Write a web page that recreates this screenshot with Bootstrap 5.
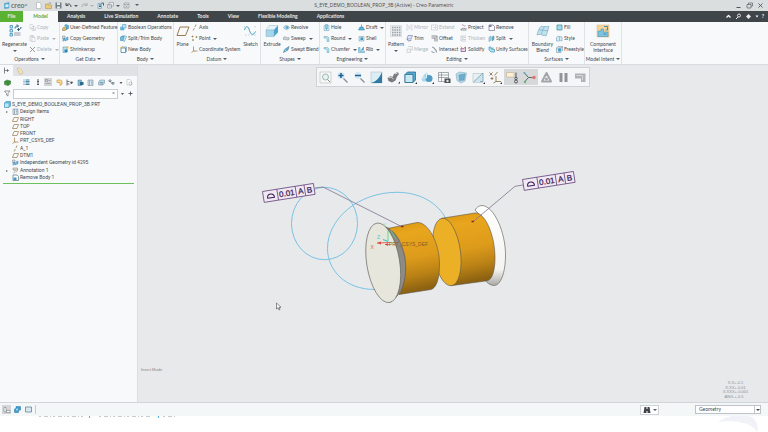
<!DOCTYPE html>
<html lang="en">
<head>
<meta charset="utf-8">
<meta name="viewport" content="width=device-width, initial-scale=1">
<title>S_EYE_DEMO_BOOLEAN_PROP_3B (Active) - Creo Parametric</title>
<link href="https://cdn.jsdelivr.net/npm/bootstrap@5.3.0/dist/css/bootstrap.min.css" rel="stylesheet">
<style>
:root{--ink:#44494f;--line:#dfe2e6;--pane:#f7f9fb}
body{font-family:Lato,"Open Sans",sans-serif;font-size:5px;line-height:7px;color:var(--ink);background:#fff;white-space:nowrap;overflow-x:hidden}
button,input,select{font:inherit;color:inherit}
button{background:none;border:0;padding:0}
svg{display:block;flex:none;fill:none;stroke-linejoin:round}
.app{min-height:100vh}
.titlebar{height:11px;background:#dadedf;display:grid;grid-template-columns:1fr auto 1fr}
.titlebar h1{font-family:"Open Sans",sans-serif;font-size:5px;line-height:11px;font-weight:400;margin:0}
.brand{font-size:7px;line-height:9px;font-weight:700;color:#6b757b;width:24px}
.quick{gap:3px}
.i6{width:7px;height:7px}
.i8{width:8px;height:8px}
.i12{width:13px;height:13px}
.i14{width:14px;height:14px}
.tabs{background:#3f4549;height:11px}
.tabs a{color:#e6e9ea;text-decoration:none;line-height:11px;padding:0 10px 0 9px;font-weight:700}
.tabs a.file{background:#5ab232;padding:0;width:23px;text-align:center}
.tabs a.now{background:var(--pane);color:#5aa53c;padding:0;width:35px;text-align:center}
.ribbon{background:var(--pane);border-bottom:1px solid #d8dbdf}
.grp{border-right:1px solid var(--line)}
.cols{display:grid;height:33px}
.cap{height:9px;line-height:9px}
.dd::after{content:"";display:inline-block;border:2px solid transparent;border-bottom:0;border-top-color:#565b60;margin-left:2px;vertical-align:1px}
.it{display:flex;align-items:center;gap:1px;height:11px}
.off{color:#b0b4b8}
.off svg{opacity:.5}
.off.dd::after{border-top-color:#b0b4b8}
.big{display:flex;flex-direction:column;align-items:center;padding-top:2px;line-height:6px;gap:3px}
.big.dd::after{margin:0}
.g-ops{width:60px}.g-ops .cols{grid-template-columns:29px 1fr}
.g-get{width:58px}.g-get .cols,.g-body .cols{padding-left:2px}
.g-body{width:56px}
.g-dat{width:87px}.g-dat .cols{grid-template-columns:17px 1fr 20px}
.g-shp{width:59px}.g-shp .cols{grid-template-columns:22px 1fr}
.g-eng{width:66px}.g-eng .cols{grid-template-columns:35px 1fr;padding-left:3px}
.g-edt{width:143px}.g-edt .cols{grid-template-columns:20px 25px 29px 28px 1fr}
.g-srf{width:56px}.g-srf .cols{grid-template-columns:27px 1fr}
.g-int{width:37px}
.side{width:138px;background:var(--pane);border-right:1px solid #dcdee1}
.sidetabs{height:11px;background:#e1e2e5}
.sidetabs button{width:13px;height:11px;display:grid;place-items:center}
.sidetabs .now{background:var(--pane)}
.sidetools{height:12px}
.filter{height:11px;gap:2px}
.filter input{display:block;width:105px;height:10px;border:1px solid #c9cdd1;background:#fff;padding:0 2px}
.filter span{top:1px;right:3px}
.tree{font-family:Roboto,sans-serif;min-height:80px;margin:2px 0 0}
.tree li{height:7px;gap:1px}
.tw{position:relative}
.tw::before{content:"";position:absolute;left:-6px;top:3px;border:1px solid transparent;border-left:2px solid #6c7176}
.insert{border-top:1px solid #6cc15a;margin:2px 3px}
.stage{background:#e8e9eb}
.scene{inset:0;width:100%;height:100%}
.gbar{z-index:1;background:#f5f6f8;border:1px solid #cfd2d5;height:20px;margin-top:2px}
.gbar button{width:17px;height:16px;display:grid;place-items:center}
.gbar .on{background:#d6d8da}
.status{height:14px;background:#f4f7f7;border-top:1px solid #d3d6d9}
.modes{gap:2px;padding-left:2px}
.modes button{width:9px;height:9px;display:grid;place-items:center}
.status .on{background:#d3d5d8}
.find{border:1px solid #cfd3d6;height:10px;width:19px;padding-left:2px;background:#fff}
.pick{margin:0 7px 0 36px}
.pick select{display:block;width:66px;height:9px;border:1px solid #bfc3c7;background:#fff;padding:0 3px;appearance:none;line-height:7px;border-radius:0}
.pick::after{content:"";position:absolute;right:1px;top:4px;border:2px solid transparent;border-bottom:0;border-top-color:#444}
.pick::before{content:"";position:absolute;right:6px;top:1px;bottom:1px;width:1px;background:#c5c9cc}
.under{min-height:16px}
</style>
<script src="https://cdn.jsdelivr.net/npm/bootstrap@5.3.0/dist/js/bootstrap.bundle.min.js"></script>
</head>
<body>
<svg width="0" height="0" class="position-absolute" aria-hidden="true">
<defs>
<linearGradient id="gold" x1="0" y1="0" x2="0.15" y2="1"><stop offset="0" stop-color="#d9960f"/><stop offset=".2" stop-color="#e8a51d"/><stop offset=".55" stop-color="#dd9b1b"/><stop offset=".8" stop-color="#b98115"/><stop offset="1" stop-color="#8c6211"/></linearGradient>
<linearGradient id="white" x1="0" y1="0" x2="0" y2="1"><stop offset="0" stop-color="#fff"/><stop offset=".8" stop-color="#f4f4f1"/><stop offset="1" stop-color="#aaa9a5"/></linearGradient>
<symbol id="copy" viewBox="0 0 14 14"><path d="M2 1h5l2 2v6H2zM6 5h5l2 2v6H6z" fill="#fff" stroke="#7a8087"/><path d="M8 9h3M8 11h3" stroke="#7a8087"/></symbol>
<symbol id="paste" viewBox="0 0 14 14"><path d="M2 2h8v10H2z" fill="#eee" stroke="#7a8087"/><path d="M4 1h4v2H4zM6 5h6v8H6z" fill="#fff" stroke="#7a8087"/></symbol>
<symbol id="cross" viewBox="0 0 14 14"><path d="M2 2l10 10M12 2L2 12" stroke="#222" stroke-width="1.8"/></symbol>
<symbol id="udf" viewBox="0 0 14 14"><path d="M1 9l3-3h5v5l-3 2H1z" fill="#d8b867" stroke="#8c7440"/><path d="M5 3l3-2 5 2v6l-4 2V5z" fill="#56b2d7" stroke="#3286ac"/></symbol>
<symbol id="geo" viewBox="0 0 14 14"><path d="M1 2h5v5H1z" fill="#d9dee2" stroke="#7a8087"/><path d="M2 13V8l3-2v5M6 12c0-4 2-7 6-8v6c-3 0-4 1-6 2z" fill="#72bfe0" stroke="#3c81a8"/></symbol>
<symbol id="wrap" viewBox="0 0 14 14"><path d="M2 2h8v11H2z" fill="#bfe0f0" stroke="#398cb8"/><path d="M5 7h6v5H5z" fill="#2687b8"/><path d="M9 1h4v4H9z" fill="#efb83c"/></symbol>
<symbol id="bool" viewBox="0 0 14 14"><path d="M5 1h7v7H8v4H1V6h4z" fill="#bfe3f2" stroke="#3c91b8"/><circle cx="5" cy="9" r="3" fill="#54aed2"/></symbol>
<symbol id="split" viewBox="0 0 14 14"><path d="M1 4l3-2h4v9H1z" fill="#6fbedd" stroke="#2f7ea6"/><path d="M9 1l4 2-4 10-3-2z" fill="#d3eaf4" stroke="#3e8bb0"/></symbol>
<symbol id="nbody" viewBox="0 0 14 14"><path d="M2 4h9v9H2z" fill="#fff" stroke="#2e7498" stroke-width="1.4"/><path d="M2 4l2-2h9v9l-2 2" stroke="#2e7498"/><circle cx="3" cy="3" r="2.2" fill="#f1b538"/></symbol>
<symbol id="plane" viewBox="0 0 14 14"><path d="M4 3h9l-3 8H1z" stroke="#9b7a45" stroke-width="1.4"/></symbol>
<symbol id="axis" viewBox="0 0 14 14"><path d="M4 13l3-5M8 6l2-5" stroke="#937548" stroke-width="1.4"/></symbol>
<symbol id="point" viewBox="0 0 14 14"><path d="M1 3h4M3 1v4M2 10h4M4 8v4M9 4h4M11 2v4" stroke="#8e6f3f" stroke-width="1.3"/></symbol>
<symbol id="csys" viewBox="0 0 14 14"><path d="M5 1v9h8M5 10l-4 3" stroke="#9b7a45" stroke-width="1.4"/><path d="M5 9l2 3" stroke="#a9873f"/></symbol>
<symbol id="rev" viewBox="0 0 14 14"><path d="M1 7c2-5 9-5 12 0-2 5-9 5-12 0z" fill="#b9dfef" stroke="#6b8fa0"/><circle cx="8" cy="7" r="2.5" fill="#4da6cc"/></symbol>
<symbol id="sweep" viewBox="0 0 14 14"><path d="M1 5c3-4 6 2 11 0v4c-5 3-8-2-11 0z" fill="#cbd4da" stroke="#7c8790"/></symbol>
<symbol id="swb" viewBox="0 0 14 14"><path d="M1 13l2-6 9-6-2 7z" fill="#5eb4d8" stroke="#476b80"/><path d="M3 7l3 3" stroke="#fff"/></symbol>
<symbol id="hole" viewBox="0 0 14 14"><path d="M2 3h10v10H2z" fill="#d4ecf5" stroke="#65a6c1"/><path d="M5 1h4v8H5z" fill="#fff" stroke="#368cae"/><path d="M7 2v10" stroke="#368cae"/></symbol>
<symbol id="round" viewBox="0 0 14 14"><path d="M2 3h5c4 0 5 2 5 6v4H8V9c0-2-1-3-3-3H2z" fill="#b7e0ee" stroke="#5aa0bf"/><path d="M3 3h4" stroke="#e3b95a"/></symbol>
<symbol id="draft" viewBox="0 0 14 14"><path d="M1 12h12L10 6H4z" fill="#55b5da" stroke="#327fa0"/><path d="M7 1v5" stroke="#d29d45" stroke-width="2"/></symbol>
<symbol id="shell" viewBox="0 0 14 14"><path d="M2 3h10v9H2z" fill="#cce7f1" stroke="#6e98aa"/><path d="M5 5h5v5H5z" fill="#3c96bd"/></symbol>
<symbol id="rib" viewBox="0 0 14 14"><path d="M1 3h3v7h9v3H1z" fill="#a7d9ea" stroke="#4d9aba"/><path d="M6 9l5-7v6" fill="#4fb0d4" stroke="#3787aa"/></symbol>
<symbol id="mirror" viewBox="0 0 14 14"><path d="M2 1v12l4-4V5zM12 1v12L8 9V5z" stroke="#7a8087"/></symbol>
<symbol id="trim" viewBox="0 0 14 14"><path d="M4 1h9l-3 7H2z" fill="#e2e4f3" stroke="#5f64a0"/><path d="M2 8c0 4 6 5 9 2" stroke="#59618b" stroke-width="1.4"/></symbol>
<symbol id="merge" viewBox="0 0 14 14"><path d="M4 1h9v7H8M2 6h7v7H2z" fill="#eee" stroke="#7a8087"/></symbol>
<symbol id="extend" viewBox="0 0 14 14"><path d="M1 2h12v10H1zM4 7h7M8 4l3 3-3 3" stroke="#7a8087"/></symbol>
<symbol id="offset" viewBox="0 0 14 14"><path d="M1 2h11v11M1 6h7v7" stroke="#4b5056" stroke-width="1.3"/><path d="M6 8l4-4" stroke="#a575ae"/></symbol>
<symbol id="inter" viewBox="0 0 14 14"><path d="M2 2c5 1 9 5 9 11M1 10c1 3 4 3 6 3" stroke="#555b61" stroke-width="1.2"/><path d="M4 3l7 9" stroke="#5b9cb5"/></symbol>
<symbol id="proj" viewBox="0 0 14 14"><path d="M1 12c4-6 8-2 12-3M2 12h11" stroke="#5b6268" stroke-width="1.3"/><path d="M4 2c4-2 3 5 7 1" stroke="#9a5ba8" stroke-width="1.3"/></symbol>
<symbol id="thick" viewBox="0 0 14 14"><path d="M12 2H2v10h10M12 5H5v4h7" stroke="#7a8087" stroke-width="1.2"/></symbol>
<symbol id="solid" viewBox="0 0 14 14"><path d="M2 4l4 2 5-4v9H2z" fill="#e9d8ea" stroke="#7e4a7d" stroke-width="1.4"/><path d="M1 1l4 3" stroke="#e2554d"/></symbol>
<symbol id="remove" viewBox="0 0 14 14"><path d="M2 2h8l3 3v8H2z" fill="#fff" stroke="#595b78" stroke-width="1.2"/><path d="M2 2h5v4H2z" fill="#8c70a8"/></symbol>
<symbol id="spl" viewBox="0 0 14 14"><path d="M2 5l4-3v8l-4 3z" fill="#b7dce9" stroke="#4f8ca5"/><path d="M8 4l4-2v7l-4 3z" fill="#5db2d0" stroke="#4f8ca5"/></symbol>
<symbol id="unify" viewBox="0 0 14 14"><path d="M2 2h4v4h4V3M2 2v6l4 4h7V7H9" fill="#b9e2ee" stroke="#2f91b3" stroke-width="1.3"/></symbol>
<symbol id="fill" viewBox="0 0 14 14"><path d="M2 2h10v10H2z" fill="#9edde6" stroke="#3b8a9a" stroke-width="1.4"/></symbol>
<symbol id="style" viewBox="0 0 14 14"><path d="M1 12V5c2-3 4-3 6-2l5 1v8l-3-1-3 1z" fill="#d5ebf4" stroke="#5f97ae"/><path d="M7 3v8" stroke="#5f97ae"/></symbol>
<symbol id="free" viewBox="0 0 14 14"><path d="M1 4h9v9H1zM4 1h9v9M1 4l3-3M10 4l3-3" fill="#dbeaf2" stroke="#6a8698"/><circle cx="7" cy="8" r="3.4" fill="#46a5cc"/></symbol>
<symbol id="lst" viewBox="0 0 14 14"><path d="M5 2h8M5 5h8M5 8h8M5 11h8" stroke="#2c7297" stroke-width="1.7"/><path d="M1 2h2M1 5h2M1 8h2M1 11h2" stroke="#3e88ac" stroke-width="1.7"/></symbol>
<symbol id="cubeb" viewBox="0 0 14 14"><path d="M1 4l3-3h9v9l-3 3H1z" fill="#62b8dc" stroke="#2c81aa"/><path d="M2 5h7v7H2z" fill="#c2e6f4"/></symbol>
<symbol id="anno" viewBox="0 0 14 14"><path d="M2 2h9v4H2zM6 6v3l-3 4" stroke="#777d84" fill="#e3ded0"/><path d="M8 11l4-6" stroke="#9a7b42"/></symbol>
<symbol id="rmb" viewBox="0 0 14 14"><path d="M2 2h8l3 3v8H2z" fill="#fff" stroke="#3c5b70" stroke-width="1.2"/><path d="M3 7h6v5H3z" fill="#3d99c3"/></symbol>
<symbol id="grid" viewBox="0 0 14 14"><path d="M2 2h10v11H2zM5 2v11M8 4h3M8 7h3M8 10h3" fill="#dce8ef" stroke="#668090"/></symbol>
<g id="frame">
  <path d="M0 0h51.5v11H0zM14.5 0v11M33 0v11M42 0v11" fill="#f0e9f4" stroke="#69487e" stroke-width=".8"/>
  <path d="M4 7.5h7c0-5-7-5-7 0z" stroke="#3b1d55" stroke-width="1"/>
  <g font-size="8" fill="#3b1d55" stroke="#3b1d55" stroke-width=".25"><text x="16" y="8.400">0.01</text><text x="35" y="8.400">A</text><text x="44" y="8.400">B</text></g>
</g>
</defs></svg>

<div class="app d-flex flex-column">
<header>
  <div class="titlebar">
    <div class="d-flex align-items-center ps-1">
      <svg class="i6" viewBox="0 0 14 14"><path d="M1 3l9-2v11l-9 1z" fill="#63b7dd" stroke="#378cb4"/><path d="M3 5h6v5H3z" fill="#d9eff8"/></svg>
      <span class="brand">creo<small>°</small></span>
      <div class="quick d-flex align-items-center">
        <button aria-label="New"><svg class="i6" viewBox="0 0 14 14"><path d="M3 1h6l3 3v9H3z" fill="#fff" stroke="#999fa5"/></svg></button>
        <button aria-label="Open"><svg class="i6" viewBox="0 0 14 14"><path d="M1 4h5l1 2h6v7H1z" fill="#ecca77" stroke="#a98640"/><path d="M7 3l3-2 2 3" stroke="#6d675a"/></svg></button>
        <button aria-label="Save"><svg class="i6" viewBox="0 0 14 14"><path d="M1 1h12v12H1z" fill="#737d86"/><path d="M4 1h6v5H4zM4 9h6v4H4z" fill="#e5e9ec"/></svg></button>
        <button aria-label="Undo" class="dd d-flex align-items-center"><svg class="i6" viewBox="0 0 14 14"><path d="M3 6c4-4 9-2 9 4M2 2v5h5" stroke="#4a4f54" stroke-width="2"/></svg></button>
        <button aria-label="Redo" class="dd off d-flex align-items-center"><svg class="i6" viewBox="0 0 14 14"><path d="M11 6c-4-4-9-2-9 4M12 2v5H7" stroke="#666" stroke-width="1.6"/></svg></button>
        <button aria-label="Regenerate model"><svg class="i6" viewBox="0 0 14 14"><path d="M2 3h7v10H2z" fill="#d4e5ec" stroke="#5e8596"/><path d="M4 6h4M4 9h4M9 2h4v5" stroke="#27718f" stroke-width="2"/></svg></button>
        <button aria-label="Windows" class="dd d-flex align-items-center"><svg class="i6" viewBox="0 0 14 14"><path d="M4 1h9v7H4zM1 5h8v7H1z" fill="#e9ecee" stroke="#7a8289"/></svg></button>
        <button aria-label="Close window"><svg class="i6" viewBox="0 0 14 14"><path d="M2 2h10v10H2zM2 5h10M5 7l4 4M9 7l-4 4" stroke="#858b91"/></svg></button>
        <button aria-label="Customize" class="dd"></button>
      </div>
    </div>
    <h1>S_EYE_DEMO_BOOLEAN_PROP_3B (Active) - Creo Parametric</h1>
    <div class="d-flex align-items-center justify-content-end gap-1 pe-1">
      <button aria-label="Minimize"><svg class="i6" viewBox="0 0 14 14"><path d="M3 11h8" stroke="#555" stroke-width="2"/></svg></button>
      <button aria-label="Restore"><svg class="i6" viewBox="0 0 14 14"><path d="M2 5h8v7H2zM5 5V2h8v6h-3" stroke="#5b6065" stroke-width="1.4"/></svg></button>
      <button aria-label="Close"><svg class="i6" viewBox="0 0 14 14"><path d="M3 3l8 8M11 3l-8 8" stroke="#4e5358" stroke-width="1.8"/></svg></button>
    </div>
  </div>
  <nav class="tabs d-flex">
    <a href="#" class="file">File</a><a href="#" class="now">Model</a><a href="#">Analysis</a><a href="#">Live Simulation</a><a href="#">Annotate</a><a href="#">Tools</a><a href="#">View</a><a href="#">Flexible Modeling</a><a href="#">Applications</a>
    <div class="quick ms-auto d-flex align-items-center pe-1">
      <button aria-label="Minimize ribbon"><svg class="i6" viewBox="0 0 14 14"><path d="M3 9l4-4 4 4" stroke="#fff" stroke-width="2.4"/></svg></button>
      <button aria-label="Search"><svg class="i6" viewBox="0 0 14 14"><circle cx="8" cy="5" r="3" stroke="#fff" stroke-width="1.6"/><path d="M6 8l-4 4" stroke="#fff" stroke-width="1.8"/></svg></button>
      <button aria-label="Learning"><svg class="i6" viewBox="0 0 14 14"><path d="M7 2l5 5-5 5-5-5z" fill="#e9ebec"/></svg></button>
      <svg width="4" height="7" viewBox="0 0 8 14"><path d="M1 5h6l-3 4z" fill="#fff"/></svg>
      <button class="text-white fw-bold">?</button>
    </div>
  </nav>

  <div class="ribbon d-flex">
    <section class="grp g-ops"><div class="cols">
      <button class="big dd"><svg class="i14" viewBox="0 0 28 28"><path d="M4 3h5v5H4zM4 11h5v5H4zM4 19h5v5H4z" fill="#cfe8f4" stroke="#3c8fb6" stroke-width="1.6"/><path d="M12 18h13M12 22h13" stroke="#7d8b95" stroke-width="1.6"/><path d="M14 9c0-4 3-6 6-5M18 1l3 3-3 3M26 6c0 4-3 6-6 5M22 8l-3 3 3 3" stroke="#245e7a" stroke-width="2"/></svg><span>Regenerate</span></button>
      <div><button class="it off"><svg class="i6"><use href="#copy"/></svg>Copy</button><button class="it off dd"><svg class="i6"><use href="#paste"/></svg>Paste</button><button class="it off dd"><svg class="i6"><use href="#cross"/></svg>Delete</button></div>
    </div><button class="cap dd d-block mx-auto">Operations</button></section>
    <section class="grp g-get"><div class="cols"><div><button class="it"><svg class="i6"><use href="#udf"/></svg>User-Defined Feature</button><button class="it"><svg class="i6"><use href="#geo"/></svg>Copy Geometry</button><button class="it"><svg class="i6"><use href="#wrap"/></svg>Shrinkwrap</button></div></div><button class="cap dd d-block mx-auto">Get Data</button></section>
    <section class="grp g-body"><div class="cols"><div><button class="it"><svg class="i6"><use href="#bool"/></svg>Boolean Operations</button><button class="it"><svg class="i6"><use href="#split"/></svg>Split/Trim Body</button><button class="it"><svg class="i6"><use href="#nbody"/></svg>New Body</button></div></div><button class="cap dd d-block mx-auto">Body</button></section>
    <section class="grp g-dat"><div class="cols">
      <button class="big"><svg class="i14" viewBox="0 0 28 28"><path d="M8 6h18l-7 17H2z" stroke="#9a7b4c" stroke-width="2"/></svg><span>Plane</span></button>
      <div><button class="it"><svg class="i6"><use href="#axis"/></svg>Axis</button><button class="it dd"><svg class="i6"><use href="#point"/></svg>Point</button><button class="it"><svg class="i6"><use href="#csys"/></svg>Coordinate System</button></div>
      <button class="big"><svg class="i14" viewBox="0 0 28 28"><path d="M3 12c3-9 7-9 10 1s8 10 12 2" stroke="#459bbf" stroke-width="2"/><path d="M4 22h3M10 22h3M16 22h3M22 22h3M3 4v3M24 4v3" stroke="#7db2cb"/></svg><span>Sketch</span></button>
    </div><button class="cap dd d-block mx-auto">Datum</button></section>
    <section class="grp g-shp"><div class="cols">
      <button class="big"><svg class="i14" viewBox="0 0 28 28"><path d="M8 3h18v15l-7 6H8z" fill="#b5dbeb"/><path d="M2 12l6-9h18l-8 9z" fill="#e6f2f7" stroke="#a3c4d3"/><path d="M18 12l8-9v13l-8 9z" fill="#4ba4cd"/><path d="M2 12h16v13H2z" fill="#a8d7ea" stroke="#7eafc7"/></svg><span>Extrude</span></button>
      <div><button class="it"><svg class="i6"><use href="#rev"/></svg>Revolve</button><button class="it dd"><svg class="i6"><use href="#sweep"/></svg>Sweep</button><button class="it"><svg class="i6"><use href="#swb"/></svg>Swept Blend</button></div>
    </div><button class="cap dd d-block mx-auto">Shapes</button></section>
    <section class="grp g-eng"><div class="cols">
      <div><button class="it"><svg class="i6"><use href="#hole"/></svg>Hole</button><button class="it dd"><svg class="i6"><use href="#round"/></svg>Round</button><button class="it dd"><svg class="i6"><use href="#round"/></svg>Chamfer</button></div>
      <div><button class="it dd"><svg class="i6"><use href="#draft"/></svg>Draft</button><button class="it"><svg class="i6"><use href="#shell"/></svg>Shell</button><button class="it dd"><svg class="i6"><use href="#rib"/></svg>Rib</button></div>
    </div><button class="cap dd d-block mx-auto">Engineering</button></section>
    <section class="grp g-edt"><div class="cols">
      <button class="big dd"><svg class="i14" viewBox="0 0 28 28"><path d="M3 3h22v22H3z" fill="#eceff1" stroke="#c8cdd1"/><path d="M6 7h17M6 12h17M6 17h17M6 22h17" stroke="#979da2" stroke-width="3" stroke-dasharray="3 1.7"/></svg><span>Pattern</span></button>
      <div><button class="it off"><svg class="i6"><use href="#mirror"/></svg>Mirror</button><button class="it"><svg class="i6"><use href="#trim"/></svg>Trim</button><button class="it off"><svg class="i6"><use href="#merge"/></svg>Merge</button></div>
      <div><button class="it off"><svg class="i6"><use href="#extend"/></svg>Extend</button><button class="it"><svg class="i6"><use href="#offset"/></svg>Offset</button><button class="it"><svg class="i6"><use href="#inter"/></svg>Intersect</button></div>
      <div><button class="it"><svg class="i6"><use href="#proj"/></svg>Project</button><button class="it off"><svg class="i6"><use href="#thick"/></svg>Thicken</button><button class="it"><svg class="i6"><use href="#solid"/></svg>Solidify</button></div>
      <div><button class="it"><svg class="i6"><use href="#remove"/></svg>Remove</button><button class="it dd"><svg class="i6"><use href="#spl"/></svg>Split</button><button class="it"><svg class="i6"><use href="#unify"/></svg>Unify Surfaces</button></div>
    </div><button class="cap dd d-block mx-auto">Editing</button></section>
    <section class="grp g-srf"><div class="cols">
      <button class="big"><svg class="i14" viewBox="0 0 28 28"><path d="M2 22c2-8 4-14 9-18 5 3 9 0 15 1-2 6-3 11-6 19-5-3-7 1-9-3-4-1-6 0-9 1z" fill="#c3e1ef" stroke="#75a8c1" stroke-width="1.3"/><path d="M11 21c1-7 3-11 6-16M6 12c5-2 11 3 18 1" stroke="#5c9bb8"/></svg><span>Boundary<br>Blend</span></button>
      <div><button class="it"><svg class="i6"><use href="#fill"/></svg>Fill</button><button class="it"><svg class="i6"><use href="#style"/></svg>Style</button><button class="it"><svg class="i6"><use href="#free"/></svg>Freestyle</button></div>
    </div><button class="cap dd d-block mx-auto">Surfaces</button></section>
    <section class="grp g-int"><div class="cols">
      <button class="big"><svg class="i14" viewBox="0 0 28 28"><path d="M2 2h24v24H2z" fill="#f4d49a" stroke="#d2b583"/><path d="M4 14h6v-4h5v6h9v9H4z" fill="#7dc3df" stroke="#438fae"/><path d="M16 5h7v7h-4M15 20h5" stroke="#438fae" stroke-width="2"/></svg><span>Component<br>Interface</span></button>
    </div><button class="cap dd d-block mx-auto">Model Intent</button></section>
  </div>
</header>

<main class="d-flex flex-grow-1">
  <aside class="side flex-shrink-0">
    <div class="sidetabs d-flex">
      <button class="now" aria-label="Model tree"><svg class="i6" viewBox="0 0 14 14"><path d="M3 1v12M3 7h9M9 4v6" stroke="#666b70" stroke-width="1.6"/></svg></button>
      <button aria-label="Layers"><svg class="i8" viewBox="0 0 16 16"><path d="M2 3l5-1 7 8-2 4H7z" fill="#f3eacb" stroke="#bfa75e"/><path d="M5 6l5 5" stroke="#d1b65f"/></svg></button>
    </div>
    <div class="sidetools d-flex align-items-center justify-content-between ps-1 pe-1">
      <svg class="i6" viewBox="0 0 14 14"><path d="M1 5l5-3 7 2v6l-5 3-7-2z" fill="#4a9f44" stroke="#286e2b"/><path d="M1 5l7 2v6M8 7l5-3" stroke="#205e2a"/></svg>
      <svg width="5" height="7"></svg>
      <svg class="i6"><use href="#lst"/></svg>
      <svg class="i6" viewBox="0 0 14 14"><path d="M6 2h4M6 5h4M6 8h4M6 11h4" stroke="#41474d" stroke-width="1.8"/></svg>
      <svg class="i8" viewBox="0 0 16 16"><path d="M0 0h16v16H0z" fill="#d2d4d6"/><path d="M3 3h4v4H3zM9 5h4M3 11h10" stroke="#777d82"/></svg>
      <svg class="i6" viewBox="0 0 14 14"><path d="M2 2h8l2 3v5l-4 3V7H2z" fill="#f8df9d" stroke="#ca9634" stroke-width="1.3"/></svg>
      <svg class="i6" viewBox="0 0 14 14"><path d="M2 1v12M2 5h5M2 10h5M9 6h4l-2 4z" stroke="#4c5359" stroke-width="1.5" fill="#4c5359"/></svg>
      <svg class="i6" viewBox="0 0 14 14"><path d="M2 2h7v11H2z" fill="#87bbd1" stroke="#557c92"/><path d="M6 6h7v6H6z" fill="#276b8d"/></svg>
      <svg class="i6"><use href="#grid"/></svg>
      <svg class="i6" viewBox="0 0 14 14"><path d="M4 2h9v6l-3 4H1V7z" fill="#bddbe8" stroke="#668897"/><path d="M3 7h8M4 10h6" stroke="#3d7089"/></svg>
      <svg class="i6" viewBox="0 0 14 14"><path d="M2 2h4v3H2zM8 7h4v3H8zM4 5l6 6" stroke="#64757f" stroke-width="1.5"/></svg>
      <svg width="4" height="7" viewBox="0 0 8 14"><path d="M1 6h6l-3 4z" fill="#555"/></svg>
      <svg class="i6" viewBox="0 0 14 14"><path d="M2 1h6l3 3v8H2z" fill="#fff" stroke="#aab0b5"/><circle cx="9" cy="9" r="3" stroke="#8a9096"/></svg>
    </div>
    <div class="filter d-flex align-items-center ps-1">
      <svg class="i6" viewBox="0 0 14 14"><path d="M1 2h11L8 7v5l-3-2V7z" stroke="#666c72" stroke-width="1.3"/></svg>
      <div class="position-relative"><input type="text" aria-label="Filter tree"><span class="position-absolute">×</span></div>
      <svg width="5" height="7" viewBox="0 0 10 14"><path d="M2 6h6l-3 4z" fill="#555"/></svg>
      <button aria-label="Add filter"><svg class="i6" viewBox="0 0 14 14"><path d="M7 3v8M3 7h8" stroke="#555a60" stroke-width="1.8"/></svg></button>
    </div>
    <ul class="tree list-unstyled d-flex flex-column justify-content-between ps-1">
      <li class="d-flex align-items-center"><svg class="i6"><use href="#cubeb"/></svg>S_EYE_DEMO_BOOLEAN_PROP_3B.PRT</li>
      <li class="tw ms-2 d-flex align-items-center"><svg class="i6"><use href="#grid"/></svg>Design Items</li>
      <li class="ms-2 d-flex align-items-center"><svg class="i6"><use href="#plane"/></svg>RIGHT</li>
      <li class="ms-2 d-flex align-items-center"><svg class="i6"><use href="#plane"/></svg>TOP</li>
      <li class="ms-2 d-flex align-items-center"><svg class="i6"><use href="#plane"/></svg>FRONT</li>
      <li class="ms-2 d-flex align-items-center"><svg class="i6"><use href="#csys"/></svg>PRT_CSYS_DEF</li>
      <li class="ms-2 d-flex align-items-center"><svg class="i6"><use href="#axis"/></svg>A_1</li>
      <li class="ms-2 d-flex align-items-center"><svg class="i6"><use href="#plane"/></svg>DTM1</li>
      <li class="ms-2 d-flex align-items-center"><svg class="i6"><use href="#geo"/></svg>Independent Geometry id 4295</li>
      <li class="tw ms-2 d-flex align-items-center"><svg class="i6"><use href="#anno"/></svg>Annotation 1</li>
      <li class="ms-2 d-flex align-items-center"><svg class="i6"><use href="#rmb"/></svg>Remove Body 1</li>
    </ul>
    <div class="insert"></div>
  </aside>

  <section class="stage flex-grow-1 position-relative d-flex justify-content-center align-items-start">
    <svg class="scene position-absolute" viewBox="138 65 630 337" preserveAspectRatio="xMidYMid meet" font-family="Liberation Sans, sans-serif">
      <g stroke="#6dbde2" stroke-width=".9"><ellipse cx="324.5" cy="223.5" rx="33" ry="36.2"/><path d="M446 219C438 203 420 192.3 397 192.3C358 192.3 327.5 219 327.5 248.5C327.5 270 345 289.5 375 289.5"/></g>
      <g stroke="#5b564e" stroke-width=".6">
        <path d="M475 210C477 207 479 205.5 482 205.5C494 206 505.5 232 505.5 255C505.5 272 501 286 493.5 285.5C490 285 487 283 485 280L494 262L490 234L478 213z" fill="url(#white)"/>
        <path d="M441.7 218.3L475 213C485 212 495 235 495 258C495 271 492 280 487 280.8L451 285.7z" fill="url(#gold)"/>
        <ellipse cx="446.8" cy="252" rx="13.6" ry="34" transform="rotate(-8 446.8 252)" fill="#ecb027"/>
        <path d="M376.7 223.5L387 227.5C398 232 406 252 406 270C406 284 400 296 389.5 302.5z" fill="#8d8b85"/>
        <path d="M387.5 228.5L417 222.5C428 221.5 439.5 243 439.5 264C439.5 280 436 288 431 289.5L399 294.5C405 286 407 270 405 257C402 243 396 231 387.5 228.5z" fill="url(#gold)"/>
        <ellipse cx="383.2" cy="262.8" rx="16.5" ry="40.2" transform="rotate(-9 383.2 262.8)" fill="#e6e6dc"/>
      </g>
      <g stroke="#7d7390" stroke-width=".8"><path d="M315 188l8-1 79.5 40M523 185l-8 1.3L472.7 222"/><path d="M401 226.5h2.5M471.5 221.5h2.5" stroke="#8c2c24" stroke-width="1.4"/></g>
      <g stroke-width=".8"><path d="M388 241.5v-11" stroke="#3fd27c"/><path d="M391 230l4 8" stroke="#5fc66f"/><path d="M388 241.5l-5-2" stroke="#35c9c4" stroke-width="1.3"/><path d="M390 242.5l-13 .5M385 244.5h5" stroke="#e0483c"/><path d="M377 243l4-1.5v3zM385 244.5l3-1.5v3z" fill="#e0483c"/></g>
      <g font-size="5"><text x="370.5" y="248.5" fill="#e0584c">X</text><text x="377" y="239" fill="#3ec9cf">Z</text><text x="383" y="227" fill="#8fd8a8">Y</text><text x="389" y="246" fill="#8a5a2a">PRT_CSYS_DEF</text></g>
      <use href="#frame" transform="translate(262.5 191.5) rotate(-9)"/>
      <use href="#frame" transform="translate(522.5 179.5) rotate(-9)"/>
      <path d="M276.5 303v6l1.5-1.3 1 2.3 1-.5-1-2.2h2z" fill="#fff" stroke="#444" stroke-width=".6"/>
      <text x="141" y="371" font-size="4" fill="#85888c">Insert Mode</text>
      <g font-size="4" fill="#8d9095" text-anchor="middle"><text x="735.5" y="384">X.X+-0.1</text><text x="735.5" y="388.5">X.XX+-0.01</text><text x="735.5" y="393">X.XXX+-0.001</text><text x="734" y="397.5">ANG.+-0.5</text></g>
    </svg>
    <div class="gbar d-flex align-items-center" role="toolbar" aria-label="Graphics">
      <button aria-label="Refit"><svg class="i12" viewBox="0 0 26 26"><path d="M2 2h22v22H2z" fill="#f6f8f5" stroke="#a9afb0"/><circle cx="13" cy="12" r="6" fill="#e8f3f3" stroke="#82a19d" stroke-width="1.5"/><path d="M17 17l5 5" stroke="#829090" stroke-width="2"/></svg></button>
      <button aria-label="Zoom in"><svg class="i12" viewBox="0 0 26 26"><circle cx="10" cy="9" r="7" fill="#d5e9f5"/><path d="M5 9h10M10 4v10" stroke="#1d5f91" stroke-width="3"/><path d="M15 15l8 8" stroke="#83909a" stroke-width="2.5"/></svg></button>
      <button aria-label="Zoom out"><svg class="i12" viewBox="0 0 26 26"><circle cx="10" cy="9" r="7" fill="#d5e9f5"/><path d="M4 9h12" stroke="#1d5f91" stroke-width="3"/><path d="M15 15l8 8" stroke="#83909a" stroke-width="2.5"/></svg></button>
      <button aria-label="Repaint"><svg class="i12" viewBox="0 0 26 26"><path d="M2 2h22v22H2z" fill="#dceef5" stroke="#a6b8c1"/><path d="M24 2v22H2c9-2 17-9 22-22z" fill="#2d7ba3"/></svg></button>
      <button aria-label="Rendering"><svg class="i12" viewBox="0 0 26 26"><path d="M1 14l6-4 4 2 3-6 7-4 3 4-4 5-3 8-7 4-7-3z" fill="#777c80"/><path d="M3 14l5-2 5 4M16 6l5-2" stroke="#d6d9db" stroke-width="2"/><path d="M22 25h4v-4z" fill="#333"/></svg></button>
      <button aria-label="Display style"><svg class="i12" viewBox="0 0 26 26"><path d="M2 7l5-5h16v16l-5 5H2z" fill="#55a9d1" stroke="#24698d" stroke-width="1.5"/><path d="M2 7h16v16H2z" fill="#cbe7f2" stroke="#24698d" stroke-width="1.5"/><path d="M22 26h4v-4z" fill="#333"/></svg></button>
      <button aria-label="Saved orientations"><svg class="i12" viewBox="0 0 26 26"><path d="M1 15L11 2l7 11v8H3z" fill="#a9d6ea"/><circle cx="16" cy="15" r="7" fill="#509cc4"/><path d="M11 3v11H2" stroke="#d9f0f8" stroke-width="2"/><path d="M22 26h4v-4z" fill="#333"/></svg></button>
      <button aria-label="View manager"><svg class="i12" viewBox="0 0 26 26"><path d="M1 3h20v18H1zM1 8h20M1 13h20M7 3v18" fill="#f9fafb" stroke="#8a9196" stroke-width="1.5"/><path d="M13 15h12v9H13z" fill="#4a4f54"/><circle cx="19" cy="20" r="2.5" fill="#dadde0"/></svg></button>
      <button aria-label="Perspective"><svg class="i12" viewBox="0 0 26 26"><path d="M2 6l7-4 14 2-3 16-8 4-8-5z" fill="#b9d9e8" stroke="#769fb4"/><path d="M8 8l12-2-2 12-9 1z" fill="#6daed0" stroke="#4f8cae"/></svg></button>
      <button aria-label="Section"><svg class="i12" viewBox="0 0 26 26"><path d="M2 5h19v18H2z" fill="#e8f1f5" stroke="#a5b4bb"/><path d="M3 22L22 4v17h-6" fill="#cce4ed" stroke="#6e98aa" stroke-width="1.5"/><path d="M22 26h4v-4z" fill="#333"/></svg></button>
      <button aria-label="Datum display"><svg class="i12" viewBox="0 0 26 26"><path d="M1 3l6 6M7 3L1 9M11 9l6-7M3 15h6M6 12v6M14 10v11h10M14 21l-5 3" stroke="#8b7349" stroke-width="1.7"/><path d="M22 26h4v-4z" fill="#333"/></svg></button>
      <button class="on" aria-label="Annotation display"><svg class="i12" viewBox="0 0 26 26"><path d="M1 3h15v9H1z" fill="#fff1cf" stroke="#b5a789"/><path d="M20 3v10" stroke="#53585d" stroke-width="2"/><circle cx="20" cy="15" r="2.5" stroke="#53585d" stroke-width="2"/><circle cx="20" cy="21" r="3" stroke="#53585d" stroke-width="2"/></svg></button>
      <button class="on" aria-label="Spin center"><svg class="i12" viewBox="0 0 26 26"><path d="M2 3l9 10-8 9M11 13h9" stroke="#4f6e65" stroke-width="2"/><circle cx="22" cy="13" r="3.5" fill="#ea7070"/><circle cx="4" cy="22" r="2.5" fill="#6abb76"/><circle cx="3" cy="4" r="2" fill="#64aebf"/></svg></button>
      <button aria-label="Simulate"><svg class="i12" viewBox="0 0 26 26"><path d="M13 4l9 17H4z" stroke="#a3a6a8" stroke-width="4"/><circle cx="13" cy="16" r="3" fill="#a3a6a8"/></svg></button>
      <button aria-label="Pause"><svg class="i12" viewBox="0 0 26 26"><path d="M5 4h6v18H5zM15 4h6v18h-6z" fill="#929598"/></svg></button>
      <button aria-label="Stop"><svg class="i12" viewBox="0 0 26 26"><path d="M2 5h21v17h-9v-7H2z" fill="#b1b4b6"/><path d="M5 9h12v9" stroke="#d4d6d7" stroke-width="2"/></svg></button>
    </div>
  </section>
</main>

<footer>
  <div class="status d-flex align-items-center">
    <div class="modes d-flex align-items-center me-auto">
      <button class="on" aria-label="Navigator"><svg class="i8" viewBox="0 0 16 16"><path d="M2 3h4v9H2zM7 9h7v4H7z" fill="#fff" stroke="#606a72"/></svg></button>
      <button aria-label="Browser"><svg class="i6" viewBox="0 0 14 14"><path d="M4 1h9v7l-4 1v4H1V6l3-1z" fill="#3d9fd0" stroke="#2672a0"/><circle cx="6" cy="7" r="2" fill="#b8e1f3"/></svg></button>
      <button aria-label="Full screen"><svg class="i6" viewBox="0 0 14 14"><path d="M1 2h12v10H1z" fill="#d8e8f2" stroke="#647f94" stroke-width="1.5"/></svg></button>
      <div class="vr"></div>
    </div>
    <button class="find dd d-flex align-items-center" aria-label="Find"><svg class="i8" viewBox="0 0 16 16"><path d="M3 2h4v4h2V2h4l2 12H9v-4H7v4H1z" fill="#404549"/></svg></button>
    <div class="pick position-relative"><select aria-label="Selection filter"><option>Geometry</option></select></div>
  </div>
  <div class="under d-flex justify-content-between align-items-start overflow-hidden pe-2">
    <svg width="180" height="3" viewBox="0 0 180 3"><path d="M39 .5h44M99 .5h52M163 .5h13" stroke="#c5cbcf" stroke-width="1" stroke-dasharray="2 3 4 2 1 2"/><path d="M89.5 0v2M158.5 0v2" stroke="#53b3dc"/></svg>
    <svg width="44" height="16" viewBox="0 0 44 16"><path d="M2 6Q16-4 36 1q6 4 6 15Q30 2 2 6z" fill="#f1f2f8"/></svg>
  </div>
</footer>
</div>
</body>
</html>
